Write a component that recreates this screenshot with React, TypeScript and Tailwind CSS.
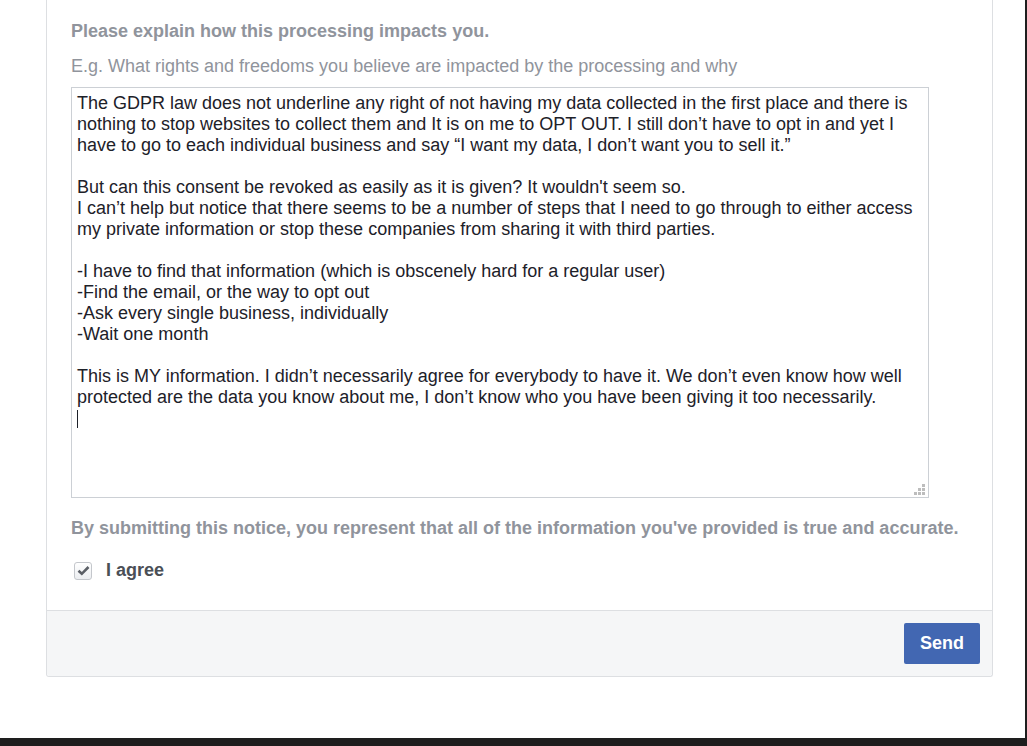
const lines = [
  'The GDPR law does not underline any right of not having my data collected in the first place and there is',
  'nothing to stop websites to collect them and It is on me to OPT OUT. I still don’t have to opt in and yet I',
  'have to go to each individual business and say “I want my data, I don’t want you to sell it.”',
  '',
  "But can this consent be revoked as easily as it is given? It wouldn't seem so.",
  'I can’t help but notice that there seems to be a number of steps that I need to go through to either access',
  'my private information or stop these companies from sharing it with third parties.',
  '',
  '-I have to find that information (which is obscenely hard for a regular user)',
  '-Find the email, or the way to opt out',
  '-Ask every single business, individually',
  '-Wait one month',
  '',
  'This is MY information. I didn’t necessarily agree for everybody to have it. We don’t even know how well',
  'protected are the data you know about me, I don’t know who you have been giving it too necessarily.',
]

function ResizeGrip() {
  return (
    <svg
      width="11"
      height="11"
      viewBox="0 0 11 11"
      className="absolute bottom-[2px] right-[3px]"
    >
      <g fill="#bdbdbd">
        <rect x="8" y="0" width="3" height="3" />
        <rect x="4" y="4" width="3" height="3" />
        <rect x="8" y="4" width="3" height="3" />
        <rect x="0" y="8" width="3" height="3" />
        <rect x="4" y="8" width="3" height="3" />
        <rect x="8" y="8" width="3" height="3" />
      </g>
    </svg>
  )
}

export default function App() {
  return (
    <div className="flex h-[746px] w-full bg-[#1e1e1e] font-['Liberation_Sans',Arial,sans-serif]">
      <div className="h-[738px] w-[1025px] bg-white">
        <div className="ml-[46px] w-[947px] rounded-b-[3px] border-x border-b border-[#dddfe2]">
          <div className="px-[24px] pb-[29px] pt-[21px]">
            <p className="text-[18px] font-bold leading-[21px] text-[#90949c]">
              Please explain how this processing impacts you.
            </p>
            <p className="mt-[14px] text-[18px] leading-[21px] text-[#90949c]">
              E.g. What rights and freedoms you believe are impacted by the
              processing and why
            </p>
            <div className="relative mt-[10px] h-[411px] w-[858px] border border-[#ccd0d5] px-[5px] pt-[5px] text-[18px] leading-[21px] text-[#1d2129]">
              {lines.map((l, i) => (
                <div key={i} className="h-[21px] whitespace-pre">
                  {l}
                </div>
              ))}
              <div className="flex h-[21px] items-center">
                <span className="h-[18px] w-px bg-[#1d2129]" />
              </div>
              <ResizeGrip />
            </div>
            <p className="mt-[20px] whitespace-nowrap text-[18px] font-bold leading-[21px] text-[#90949c]">
              By submitting this notice, you represent that all of the
              information you've provided is true and accurate.
            </p>
            <label className="mt-[21px] flex h-[21px] items-center gap-[14px] pl-[3px]">
              <span className="flex h-[18px] w-[18px] items-center justify-center rounded-[3px] border border-[#c4c7cc] bg-gradient-to-b from-[#ffffff] to-[#eceef1]">
                <svg width="13" height="11" viewBox="0 0 13 11">
                  <path
                    d="M1.5 5.8 L4.8 8.8 L11.5 2"
                    fill="none"
                    stroke="#5b5f66"
                    strokeWidth="2.6"
                  />
                </svg>
              </span>
              <span className="text-[18px] font-bold leading-[21px] text-[#4b4f56]">
                I agree
              </span>
            </label>
          </div>
          <div className="flex justify-end rounded-b-[3px] border-t border-[#dddfe2] bg-[#f5f6f7] px-[12px] py-[12px]">
            <button
              type="button"
              className="h-[41px] w-[76px] rounded-[2px] bg-[#4267b2] text-[18px] font-bold text-white"
            >
              Send
            </button>
          </div>
        </div>
      </div>
    </div>
  )
}
